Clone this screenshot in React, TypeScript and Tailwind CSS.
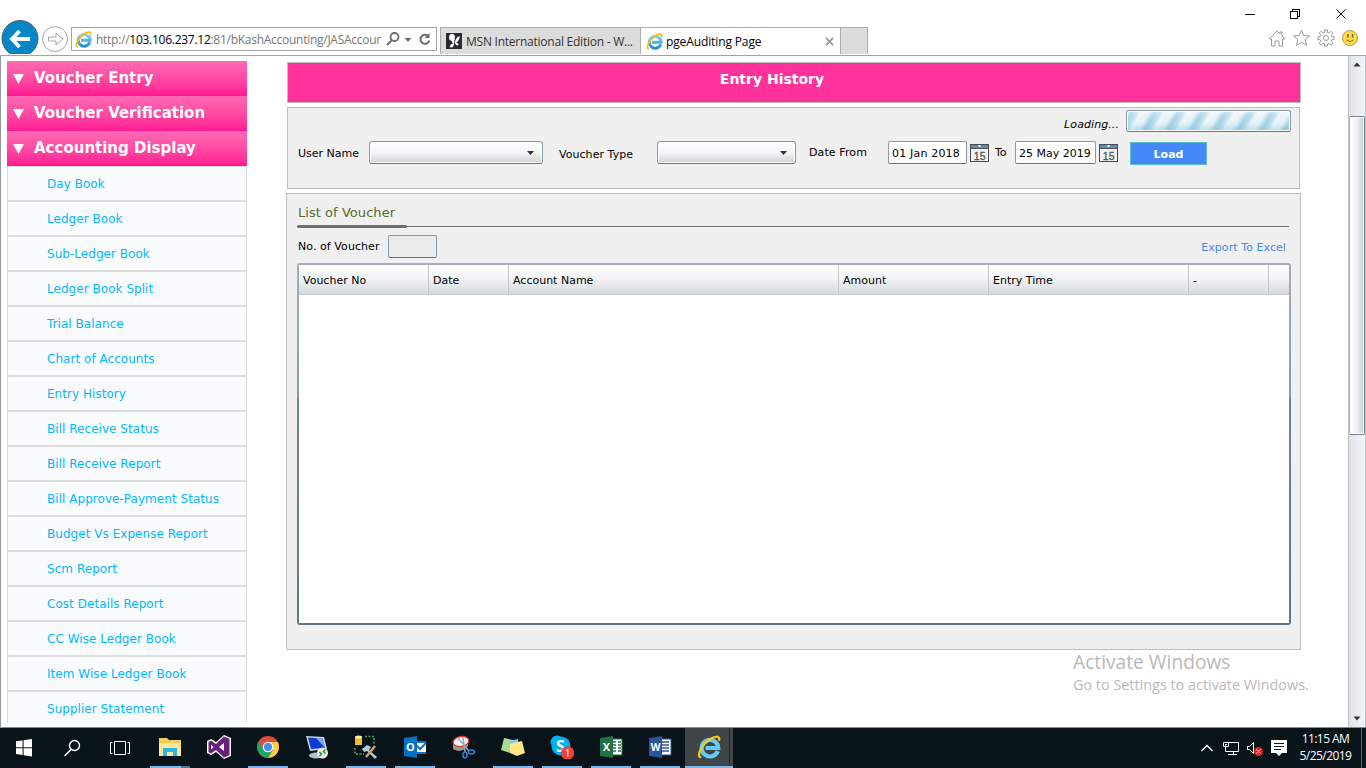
import React from "react";

const MENU = [
  "Day Book", "Ledger Book", "Sub-Ledger Book", "Ledger Book Split", "Trial Balance", "Chart of Accounts",
  "Entry History", "Bill Receive Status", "Bill Receive Report", "Bill Approve-Payment Status",
  "Budget Vs Expense Report", "Scm Report", "Cost Details Report", "CC Wise Ledger Book",
  "Item Wise Ledger Book", "Supplier Statement",
];

function IE({ className, id }: { className: string; id: string }) {
  return (
    <svg viewBox="0 0 24 24" className={className}>
      <defs>
        <linearGradient id={id} x1="0" y1="0" x2="0" y2="1">
          <stop offset="0" stopColor="#7fd6fa" />
          <stop offset="1" stopColor="#1c8fd8" />
        </linearGradient>
      </defs>
      <path d="M20.8 16A8.300 8.300 0 1 1 21.300 13H8.500" fill="none" stroke={`url(#${id})`} strokeWidth="4.200" />
      <path d="M3.200 22.200C-.4 19.500 5 9.500 12.500 4.500C17.500 1.100 22.800.4 22.300 4.800" fill="none" stroke="#f7b916" strokeWidth="2.400" strokeLinecap="round" />
    </svg>
  );
}

function BrowserBar() {
  return (
    <header className="flex h-14 shrink-0 flex-col border-b border-[#9aa4ae] bg-white">
      <div className="flex h-[27px] shrink-0 justify-end">
        <svg viewBox="0 0 126 27" className="h-[27px] w-[126px]" fill="none" stroke="#000" shapeRendering="crispEdges">
          <path d="M5 14.500h10" />
          <path d="M50.500 11.500h7v7h-7zM52.500 11.500v-2h7v7h-2" />
          <path d="M96.500 9.500l9 9M105.500 9.500l-9 9" shapeRendering="auto" />
        </svg>
      </div>
      <div className="flex h-7 shrink-0 items-start">
        <svg viewBox="0 0 71 34" className="-mt-[7px] h-[34px] w-[71px] shrink-0">
          <circle cx="20" cy="18.500" r="18" fill="#0586c8" stroke="#53616b" />
          <path d="M30 19H12M19.500 11l-7.500 8 7.500 8" fill="none" stroke="#fff" strokeWidth="3.800" />
          <circle cx="55" cy="19" r="12.500" fill="#fff" stroke="#a6a6a6" />
          <path d="M48.500 17h7.500v-4l7 6-7 6v-4h-7.500z" fill="#fff" stroke="#a6a6a6" />
        </svg>
        <div className="flex h-6 w-[366px] shrink-0 items-center border border-[#a5a5a5] pl-[3px] font-['Open_Sans',sans-serif] text-[12px] text-[#777]">
          <IE id="ie-address" className="h-[17px] w-[17px] shrink-0" />
          <span className="ml-[3px] w-[286px] whitespace-nowrap pl-px pt-[2px] tracking-[-0.27px]">http://<span className="text-black">103.106.237.12</span>:81/bKashAccounting/JASAccour</span>
          <svg viewBox="0 0 46 18" className="ml-[5px] h-[18px] w-[46px] shrink-0" fill="none" stroke="#6c6c6c">
            <circle cx="8.500" cy="7" r="4" strokeWidth="1.800" />
            <path d="M5.500 10.500L1 15" strokeWidth="2" />
            <path d="M18.500 8h7L22 12z" fill="#6c6c6c" stroke="none" />
            <path d="M42 6a4.500 4.500 0 1 0 1.300 4.500" strokeWidth="2" />
            <path d="M43.500 3v5h-5z" fill="#6c6c6c" stroke="none" />
          </svg>
        </div>
        <div className="ml-[3px] flex h-[27px] w-[428px] border border-b-0 border-[#acacac] bg-[#dcdcdc] font-['Open_Sans',sans-serif] text-[12px]">
          <div className="flex w-[199px] items-center pl-[5px] text-[#333]">
            <svg viewBox="0 0 16 16" className="h-4 w-4"><rect width="16" height="16" fill="#292c2e" /><ellipse cx="6" cy="4.300" rx="2.900" ry="3.500" fill="#fff" /><path d="M5 6.500L8.500 6 8.200 10.500C8 13.500 6 15 4.200 14.200C3.200 13 4.500 11.500 6.800 10.500zM9 9.500C9.500 6 11.500 3 13.800 3.200C14 6 12 8.500 10 9.800C12 9.800 13 11 12.300 12.500C10.500 12.700 9.200 11.500 9 9.500z" fill="#fff" /></svg>
            <span className="ml-[4px] whitespace-nowrap pt-px tracking-[-0.24px]">MSN International Edition - W...</span>
          </div>
          <div className="flex w-[201px] items-center border-x border-[#acacac] bg-white pl-[5px] text-black">
            <IE id="ie-tab" className="h-[17px] w-[17px]" />
            <span className="ml-[3px] flex-1 pt-px tracking-[-0.12px]">pgeAuditing Page</span>
            <svg viewBox="0 0 10 10" className="mr-[6px] h-[9px] w-[9px]" stroke="#999" strokeWidth="2"><path d="M1 1l8 8M9 1L1 9" /></svg>
          </div>
        </div>
        <div className="flex-1" />
        <svg viewBox="0 0 92 20" className="mr-[6px] mt-[1px] h-5 w-[92px]" fill="#fff" stroke="#999">
          <path d="M1.500 11L9 3l3 3V4h2v4l3 3h-2.500v7H11v-5H7v5H3.500v-7z" />
          <path d="M33.500 2l2.200 5.600 5.800.3-4.500 3.700 1.600 5.900-5.100-3.300-5.100 3.300 1.600-5.900-4.500-3.700 5.800-.3z" />
          <path d="M56.500 2h3v2.500l1.500.6 1.900-1.900 2.100 2.100-1.900 1.900.6 1.500H66v3h-2.300l-.6 1.500 1.900 1.900-2.100 2.100-1.900-1.900-1.500.6V18h-3v-2.100l-1.500-.6-1.900 1.900-2.100-2.100 1.900-1.900-.6-1.500H50v-3h2.300l.6-1.500L51 5.300l2.100-2.100L55 5.100l1.500-.6z" />
          <circle cx="58" cy="10" r="2.500" />
          <circle cx="82" cy="10" r="7.500" fill="#ffda45" stroke="#b79b4c" />
          <path d="M80 6v3.500M84.500 6v3.500" stroke="#7a6420" strokeWidth="1.500" /><path d="M78.500 12q3.500 3 7 0" stroke="#8a7330" fill="none" />
        </svg>
      </div>
    </header>
  );
}

function Sidebar() {
  return (
    <nav className="h-[662px] w-60 shrink-0 overflow-hidden">
      {["Voucher Entry", "Voucher Verification", "Accounting Display"].map((t) => (
        <div key={t} className="flex h-[35px] items-center bg-linear-to-b from-[#ff69b4] to-[#ff1493] pl-[6px] text-[15px] font-bold text-white">
          <svg viewBox="0 0 11 10" className="mr-[10px] h-[10px] w-[11px]"><path d="M0 0h11L5.500 10z" fill="#fff" /></svg>
          <span className="-mt-px whitespace-nowrap">{t}</span>
        </div>
      ))}
      {MENU.map((t) => (
        <div key={t} className="flex h-[35px] items-center border border-[#dcdcdc] bg-[#fafbfd] pl-[39px] text-[12px] tracking-[0.04px] text-[#00b8fc]">
          <span className="whitespace-nowrap">{t}</span>
        </div>
      ))}
    </nav>
  );
}

function Combo({ className }: { className: string }) {
  return (
    <div className={`${className} flex h-[23px] items-center justify-end rounded-[3px] border border-[#8b9aa8] border-b-[#647686] bg-linear-to-b from-white via-[#f3f5f6] to-[#d0d4d7] pr-2 shadow-[inset_0_0_0_1px_#fff]`}>
      <svg viewBox="0 0 7 4" className="h-1 w-[7px]"><path d="M0 0h7L3.500 4z" fill="#333" /></svg>
    </div>
  );
}

function Cal() {
  return (
    <svg viewBox="0 0 19 18" className="mt-[3px] h-[18px] w-[19px] shrink-0">
      <rect x=".5" y=".5" width="18" height="17" fill="#f1f1f1" stroke="#4a4a4a" />
      <rect x="1" y="1" width="17" height="3" fill="#4f8fc4" />
      <path d="M0 4.500h19" stroke="#555" />
      <rect x="8.500" y="1" width="2" height="2" fill="#fff" />
      <text x="9.700" y="15.500" textAnchor="middle" fontSize="10.500" fontFamily="Liberation Sans" fill="#555" stroke="#555" strokeWidth=".3">15</text>
    </svg>
  );
}

function Filters() {
  return (
    <section className="ml-px mt-1 h-[82px] w-[1013px] border border-[#bdbdbd] bg-[#f0f0f0] text-[11px] text-black">
      <div className="flex h-[33px] items-start justify-end pr-[8px] pt-[2px]">
        <span className="mr-[7px] mt-[7px] tracking-[0.08px] italic">Loading...</span>
        <div className="h-[22px] w-[165px] overflow-hidden rounded-[3px] border border-[#8b9aa8] border-b-[#647686] bg-white p-px">
          <svg viewBox="0 0 161 18" className="h-[18px] w-[161px]">
            <defs>
              <linearGradient id="stripe" gradientUnits="userSpaceOnUse" x1="4" y1="0" x2="21" y2="10.400" spreadMethod="repeat">
                <stop offset="0" stopColor="#a4d1e5" />
                <stop offset=".22" stopColor="#bfdfed" />
                <stop offset=".4" stopColor="#f3f9fc" />
                <stop offset=".75" stopColor="#e9f4f9" />
                <stop offset="1" stopColor="#a4d1e5" />
              </linearGradient>
              <linearGradient id="shade" x1="0" y1="0" x2="0" y2="1">
                <stop offset="0" stopColor="#fff" stopOpacity=".35" />
                <stop offset=".5" stopColor="#a5d2e6" stopOpacity=".05" />
                <stop offset="1" stopColor="#6cb2d4" stopOpacity=".38" />
              </linearGradient>
            </defs>
            <rect width="161" height="18" fill="url(#stripe)" />
            <rect width="161" height="18" fill="url(#shade)" />
          </svg>
        </div>
      </div>
      <div className="flex h-[26px] items-start whitespace-nowrap pl-[10px]">
        <span className="mt-[5px] w-[71px]">User Name</span>
        <Combo className="w-[174px]" />
        <span className="ml-4 mt-[6px] w-[98px] tracking-[0.05px]">Voucher Type</span>
        <Combo className="w-[139px]" />
        <span className="ml-[13px] mt-[4px] w-[79px] tracking-[0.1px]">Date From</span>
        <span className="h-[23px] w-[79px] rounded-[2px] border border-[#8b9aa8] border-b-[#647686] bg-white pl-[3px] pt-[4px] tracking-[0.18px]">01 Jan 2018</span>
        <span className="w-[3px]" /><Cal />
        <span className="ml-[6px] mt-[4px] w-[20px]">To</span>
        <span className="h-[23px] w-[81px] rounded-[2px] border border-[#8b9aa8] border-b-[#647686] bg-white pl-[3px] pt-[4px]">25 May 2019</span>
        <span className="w-[3px]" /><Cal />
        <button className="ml-3 mt-px h-[23px] w-[77px] border border-[#5bbfd4] bg-[#4489f7] pt-[2px] text-[11px] font-bold leading-[19px] text-white">Load</button>
      </div>
    </section>
  );
}

function VoucherList() {
  return (
    <section className="mt-1 flex h-[457px] w-[1015px] flex-col border border-[#bdbdbd] bg-[#f0f0f0] px-[10px] text-[11px] text-black">
      <h2 className="h-[31px] w-[991px] pl-px pt-[9px] text-[13px] tracking-[0.05px] text-[#556b2f]">List of Voucher</h2>
      <div className="flex h-[3px] w-[992px] items-center">
        <div className="h-[3px] w-[110px] rounded bg-[#6e6e6e]" />
        <div className="h-px flex-1 bg-[#6e6e6e]" />
      </div>
      <div className="flex h-[35px] items-start pl-px pt-[7px]">
        <span className="mt-[4px] w-[90px] whitespace-nowrap tracking-[0.07px]">No. of Voucher</span>
        <span className="h-[23px] w-[49px] rounded-[2px] border border-[#8b9aa8] border-b-[#647686] bg-[#ebebeb]" />
        <span className="ml-auto mr-[4px] mt-[5px] tracking-[0.07px] text-[#4489f7]">Export To Excel</span>
      </div>
      <div className="h-[362px] w-[994px] shrink-0 rounded-[3px] bg-[linear-gradient(#a3aeb9,#879cac_37%,#6e8394_38%,#617584)] p-[2px]">
        <div className="h-[358px] bg-white">
          <div className="flex h-[30px] border-b border-[#c8cacc] bg-linear-to-b from-[#fcfdfd] via-[#f1f3f4] to-[#d5d9de]">
            {([["Voucher No", "w-[130px]"], ["Date", "w-[80px]"], ["Account Name", "w-[330px]"], ["Amount", "w-[150px]"], ["Entry Time", "w-[200px]"], ["-", "w-[80px]"]]).map(([t, w]) => (
              <div key={t} className={`${w} border-r border-[#c4c8cb] pl-1 pt-[8px]`}>{t}</div>
            ))}
          </div>
        </div>
      </div>
    </section>
  );
}

function Scrollbar() {
  return (
    <div className="flex w-[18px] flex-col border-x border-[#b9c2ca] bg-linear-to-r from-[#dfe3e8] to-[#f3f6f9]">
      <svg viewBox="0 0 16 16" className="h-[17px] w-4"><path d="M4.500 10L8 6l3.500 4z" fill="#333" /></svg>
      <div className="mt-[43px] h-[319px] w-4 rounded-[2px] border border-[#708090] border-l-[#a9b5bf] bg-linear-to-r from-white via-[#f0f2f3] to-[#c5cbd0] shadow-[inset_0_0_0_1px_#fff]" />
      <div className="flex-1" />
      <svg viewBox="0 0 16 16" className="h-[17px] w-4"><path d="M4.500 6L8 10l3.500-4z" fill="#333" /></svg>
    </div>
  );
}

function TaskItem({ children, open, active, stacked }: { children?: React.ReactNode; open?: boolean; active?: boolean; stacked?: boolean }) {
  return (
    <div className={`flex h-10 w-[49px] shrink-0 flex-col items-center pr-px ${active ? "bg-[linear-gradient(to_right,#404548_44px,#22292d_44px,#22292d_45px,#404548_45px,#404548_48px,transparent_48px)]" : ""}`}>
      <div className="flex h-[38px] items-center justify-center">
        <svg viewBox="0 0 24 24" className="h-6 w-6">{children}</svg>
      </div>
      {open && (
        <div className={`flex h-[2px] shrink-0 justify-end bg-[#76b9ed] ${active ? "w-[48px]" : "w-10"}`}>
          {stacked && <div className="h-[2px] w-[9px] bg-[#4d7799]" />}
        </div>
      )}
    </div>
  );
}

function Taskbar() {
  return (
    <footer className="flex h-10 shrink-0 bg-[#08131a] text-white">
      <svg viewBox="0 0 146 40" className="h-10 w-[146px] shrink-0" fill="none" stroke="#fff">
        <path d="M16 13.300l6.600-.9v6.800H16zM23.600 12.200l8.400-1.200v8.200h-8.400zM16 20.200h6.600v6.800l-6.600-.9zM23.600 20.200H32v8.200l-8.400-1.200z" fill="#fff" stroke="none" />
        <circle cx="74.500" cy="17.500" r="5" strokeWidth="1.400" /><path d="M71 21.500L64.500 28" strokeWidth="1.600" />
        <path d="M114.500 13.500h11v13h-11zM112.500 14.500h-2v11h2M127.500 14.500h2v11h-2" />
      </svg>
      <TaskItem open stacked>
        <path d="M1 3h8l2 2h12v16H1z" fill="#f5cd5b" /><path d="M1 8h22v13H1z" fill="#ffe596" /><path d="M5 21v-8h14v8h-4v-4H9v4z" fill="#29b5ea" />
      </TaskItem>
      <TaskItem>
        <path d="M17 0l7 3v18l-7 3-8-7-5 3-4-2V6l4-2 5 3z" fill="#fff" /><path d="M16.800 1.500l5.700 2.300v16.400l-5.700 2.300L9 15 4 18.500 1.500 17V7L4 5.500l5 3.500zM17 8l-5 4 5 4zM4 9.500v5L6.500 12z" fill="#68217a" fillRule="evenodd" />
      </TaskItem>
      <TaskItem open>
        <circle cx="12" cy="12" r="11" fill="#dd4b3e" /><path d="M2.500 6.500A11 11 0 0 0 12 23l5-8.500-5-2.500-5 2z" fill="#1da462" /><path d="M12 23A11 11 0 0 0 21.800 7H12l5 8z" fill="#ffcd41" /><circle cx="12" cy="12" r="5.300" fill="#fff" /><circle cx="12" cy="12" r="4.200" fill="#4a8af4" />
      </TaskItem>
      <TaskItem>
        <path d="M1 1l18 1 3 12-17 2z" fill="#cdd5df" /><path d="M3 2.500l14.500 1 2.500 9.500-14 1z" fill="#1238d6" /><path d="M11 3l6.500.5L20 13z" fill="#76a9ff" /><ellipse cx="11" cy="20.500" rx="7" ry="3" fill="#b9bfc4" /><circle cx="17.500" cy="18" r="5.500" fill="#e9e9e5" /><path d="M14.500 17l2 2-2 2M20.500 14.500l-2 2 2 2" stroke="#2d8e43" strokeWidth="1.500" fill="none" />
      </TaskItem>
      <TaskItem open>
        <path d="M11 1.500h9v7M1 13v6h9" fill="none" stroke="#4aa64b" strokeDasharray="2 1.500" strokeWidth="1.500" /><path d="M1 2h7v8H1z" fill="#e9bb3f" /><ellipse cx="4.500" cy="2" rx="3.500" ry="1.500" fill="#fff09b" /><path d="M8 14l5-4 4 2-2 3 8 7-2 2-8-8-3 1z" fill="#b9c6d3" /><path d="M21 11l-9 11" stroke="#c9a66c" strokeWidth="2.500" />
      </TaskItem>
      <TaskItem open>
        <path d="M12 6h11v13H12z" fill="#0f73cf" /><path d="M12 8h11v9H12z" fill="#fff" /><path d="M12 9l5 5 6-6" stroke="#0f73cf" strokeWidth="2" fill="none" /><path d="M1 3l13-2v22L1 21z" fill="#0072c6" /><text x="7.500" y="16" fontSize="11" fontWeight="700" fontFamily="Open Sans" textAnchor="middle" fill="#fff">O</text>
      </TaskItem>
      <TaskItem>
        <path d="M1 7v7q8 5 15-3V5z" fill="#999" /><ellipse cx="9" cy="6.500" rx="8" ry="5" transform="rotate(-10 9 6.500)" fill="#f6f6f6" stroke="#d9323b" strokeWidth="1.300" /><path d="M6 3l11 13M11 2l2 15" stroke="#9da9b0" strokeWidth="1.500" /><ellipse cx="13" cy="20" rx="2" ry="3" fill="none" stroke="#3481c8" strokeWidth="1.600" /><ellipse cx="19.500" cy="17" rx="3" ry="2" fill="none" stroke="#3481c8" strokeWidth="1.600" />
      </TaskItem>
      <TaskItem open>
        <path d="M3 3l9 2-3 13-9-3z" fill="#a6dc97" /><path d="M8 6l9-2 2 13-9 1z" fill="#8fc5e9" /><path d="M9 9l12-3 3 12-8 3-7-3z" fill="#ffe786" />
      </TaskItem>
      <TaskItem open>
        <circle cx="7" cy="7" r="6.500" fill="#00aff0" /><circle cx="11" cy="11" r="9.500" fill="#00aff0" /><text x="10.500" y="17" fontSize="16" fontWeight="700" fontFamily="Open Sans" textAnchor="middle" fill="#fff">S</text><circle cx="17.500" cy="18" r="6.700" fill="#f2413a" /><text x="17.500" y="21.500" fontSize="10" fontFamily="Open Sans" textAnchor="middle" fill="#fff">1</text>
      </TaskItem>
      <TaskItem open>
        <path d="M12 4h11v16H12z" fill="#fff" stroke="#207245" /><path d="M14 7h3M19 7h3M14 10h3M19 10h3M14 13h3M19 13h3M14 16h3M19 16h3" stroke="#207245" strokeWidth="1.500" /><path d="M1 3l13-2v22L1 21z" fill="#207245" /><text x="7.500" y="16" fontSize="11" fontWeight="700" fontFamily="Open Sans" textAnchor="middle" fill="#fff">X</text>
      </TaskItem>
      <TaskItem open>
        <path d="M12 4h11v16H12z" fill="#fff" stroke="#2a5699" /><path d="M14 7h7M14 10h7M14 13h7M14 16h7" stroke="#2a5699" strokeWidth="1.300" /><path d="M1 3l13-2v22L1 21z" fill="#2a5699" /><text x="7.500" y="16" fontSize="10" fontWeight="700" fontFamily="Open Sans" textAnchor="middle" fill="#fff">W</text>
      </TaskItem>
      <TaskItem open active>
        <path d="M20.800 16A8.300 8.300 0 1 1 21.300 13H8.500" fill="none" stroke="#62cdf7" strokeWidth="4.200" /><path d="M3.200 22.200C-.4 19.500 5 9.500 12.500 4.500C17.500 1.100 22.800.4 22.300 4.800" fill="none" stroke="#f9c920" strokeWidth="2.200" strokeLinecap="round" />
      </TaskItem>
      <div className="flex-1" />
      <svg viewBox="0 0 90 40" className="h-10 w-[90px] shrink-0" fill="none" stroke="#fff">
        <path d="M1.500 23L7 17.500l5.500 5.500" strokeWidth="1.300" />
        <path d="M28.500 14.500h10v9h-13v-6M33.500 23.500v3M28 26.500h9M23.500 14.500h5v4h-5zM25 16.500h2" />
        <path d="M47.500 18.500h2l4-4v11l-4-4h-2z" /><circle cx="58.500" cy="23.500" r="4.500" fill="#e02424" stroke="none" /><path d="M56.500 21.500l4 4M60.500 21.500l-4 4" />
        <path d="M71 12h16v13h-5l-3 3-3-3h-5z" fill="#fff" stroke="none" /><path d="M74 15.500h10M74 18.500h10M74 21.500h7" stroke="#08131a" />
      </svg>
      <div className="flex w-[71px] flex-col items-center pt-[2px] font-['Open_Sans',sans-serif] text-[12px] leading-[17px] tracking-[-0.55px]"><span>11:15 AM</span><span>5/25/2019</span></div>
      <div className="w-[5px] border-l border-[#5b6469]" />
    </footer>
  );
}

export default function App() {
  return (
    <div className="relative flex h-[768px] w-[1366px] flex-col overflow-hidden bg-white font-['DejaVu_Sans',sans-serif]">
      <BrowserBar />
      <div className="flex h-[672px] shrink-0 border-b border-l border-b-[#7f8b95] border-l-[#8f9aa6]">
        <div className="pl-[6px] pt-[5px]"><Sidebar /></div>
        <main className="flex-1 pl-[39px] pt-[6px]">
          <h1 className="ml-px h-[41px] w-[1014px] border border-[#bdbdbd] bg-[#ff329b] pt-[6px] text-center text-[14px] font-bold leading-[20px] text-white"><span className="pr-[44px]">Entry History</span></h1>
          <Filters />
          <VoucherList />
        </main>
        <Scrollbar />
      </div>
      <Taskbar />
      <div className="absolute left-[1073px] top-[649px] whitespace-nowrap font-['Open_Sans',sans-serif] text-[#b9b9b9]">
        <div className="text-[19.200px] leading-[26px]">Activate Windows</div>
        <div className="text-[14.400px] leading-[20px]">Go to Settings to activate Windows.</div>
      </div>
    </div>
  );
}
